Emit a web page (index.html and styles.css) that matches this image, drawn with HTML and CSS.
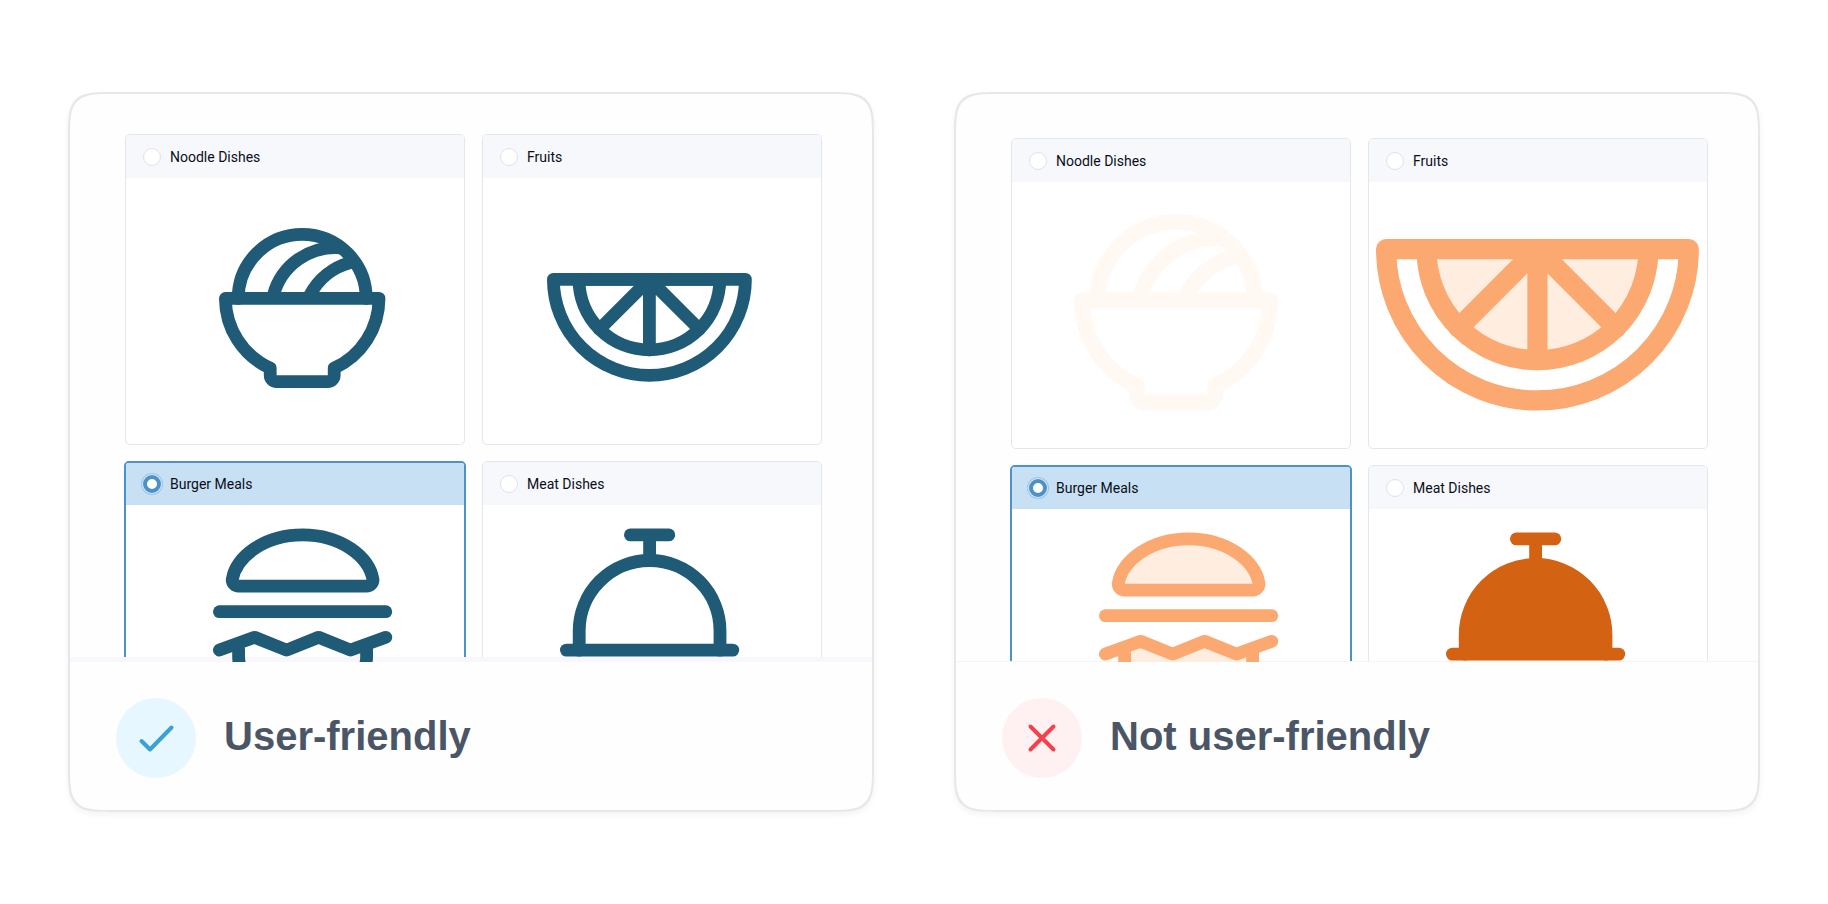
FILE: index.html
```html
<!DOCTYPE html>
<html lang="en">
<head>
<meta charset="utf-8">
<meta name="viewport" content="width=device-width, initial-scale=1">
<title>Image choices: user-friendly or not</title>
<link rel="stylesheet" href="styles.css">
</head>
<body>
<svg class="sprite" aria-hidden="true">
  <defs>
    <g id="noodles">
      <path d="M3 11A10 10 0 0 1 23 11"/>
      <path d="M8.5 10.500A10 10 0 0 1 19 3.1"/>
      <path d="M14.2 10.500A10 10 0 0 1 20.5 5.4"/>
      <path d="M1 11H25A12 12 0 0 1 18 21.9V23A1 1 0 0 1 17 24H9A1 1 0 0 1 8 23V21.9A12 12 0 0 1 1 11Z"/>
    </g>
    <g id="fruit">
      <path class="plain" d="M1 1H31A15 15 0 0 1 1 1Z"/>
      <path d="M5 1H27A11 11 0 0 1 5 1Z"/>
      <path d="M16 1V12M16 1L8.2 8.8M16 1L23.8 8.8"/>
    </g>
    <g id="burger">
      <path d="M4 9A1 1 0 0 1 3 8C3.6 4.4 8 1 14 1S24.4 4.4 25 8A1 1 0 0 1 24 9Z"/>
      <path d="M1 13H27"/>
      <path d="M4 18L6.5 17L11.5 19L16.5 17L21.5 19L24 18V20A5 5 0 0 1 19 25H9A5 5 0 0 1 4 20Z" stroke="none"/>
      <path class="plain" d="M4 19V20A5 5 0 0 0 9 25H19A5 5 0 0 0 24 20V19"/>
      <path class="plain" d="M1 19L6.5 17L11.5 19L16.5 17L21.5 19L27 17"/>
    </g>
    <g id="meat">
      <path d="M11 1H17M14 1V5"/>
      <path d="M3 19V16A11 11 0 0 1 25 16V19"/>
      <path d="M1 19H27"/>
    </g>
  </defs>
</svg>

<main class="page">
  <section class="card">
    <div class="gallery gallery-good">
      <label class="option">
        <span class="option-head"><input class="radio" type="radio" name="good">Noodle Dishes</span>
        <svg class="art teal" viewBox="0 0 338 266" aria-hidden="true"><use href="#noodles" transform="translate(93 50) scale(6.4)"/></svg>
      </label>
      <label class="option">
        <span class="option-head"><input class="radio" type="radio" name="good">Fruits</span>
        <svg class="art teal" viewBox="0 0 338 266" aria-hidden="true"><use href="#fruit" transform="translate(64 95) scale(6.4)"/></svg>
      </label>
      <label class="option selected">
        <span class="option-head"><input class="radio" type="radio" name="good" checked>Burger Meals</span>
        <svg class="art teal" viewBox="0 0 338 266" aria-hidden="true"><use href="#burger" transform="translate(87 23.5) scale(6.4)"/></svg>
      </label>
      <label class="option">
        <span class="option-head"><input class="radio" type="radio" name="good">Meat Dishes</span>
        <svg class="art teal" viewBox="0 0 338 266" aria-hidden="true"><use href="#meat" transform="translate(77 23.5) scale(6.4)"/></svg>
      </label>
    </div>
    <div class="verdict">
      <svg class="badge badge-good" viewBox="0 0 80 80" aria-hidden="true"><path d="M25.500 43L34 51.500L55.500 29.500"/></svg>
      <h2 class="title">User-friendly</h2>
    </div>
  </section>

  <section class="card">
    <div class="gallery gallery-bad">
      <label class="option">
        <span class="option-head"><input class="radio" type="radio" name="bad">Noodle Dishes</span>
        <svg class="art pale" viewBox="0 0 338 266" aria-hidden="true"><use href="#noodles" transform="translate(62 32) scale(7.85)"/></svg>
      </label>
      <label class="option">
        <span class="option-head"><input class="radio" type="radio" name="bad">Fruits</span>
        <svg class="art orange" viewBox="0 0 338 266" aria-hidden="true"><use href="#fruit" transform="translate(7 57) scale(10.09)"/></svg>
      </label>
      <label class="option selected">
        <span class="option-head"><input class="radio" type="radio" name="bad" checked>Burger Meals</span>
        <svg class="art orange" viewBox="0 0 338 266" aria-hidden="true"><use href="#burger" transform="translate(87 23.5) scale(6.4)"/></svg>
      </label>
      <label class="option">
        <span class="option-head"><input class="radio" type="radio" name="bad">Meat Dishes</span>
        <svg class="art rust" viewBox="0 0 338 266" aria-hidden="true"><use href="#meat" transform="translate(77 23.5) scale(6.4)"/></svg>
      </label>
    </div>
    <div class="verdict">
      <svg class="badge badge-bad" viewBox="0 0 80 80" aria-hidden="true"><path d="M28.500 28.500L51.500 51.500M51.500 28.500L28.500 51.500"/></svg>
      <h2 class="title">Not user-friendly</h2>
    </div>
  </section>
</main>
</body>
</html>
```

FILE: styles.css
```css
* {
  box-sizing: border-box;
}

body {
  margin: 0;
  background: #fff;
  color: #0a0e1a;
  font-family: Roboto, "Liberation Sans", sans-serif;
}

.sprite {
  display: none;
}

.page {
  display: grid;
  grid-template-columns: 1fr 1fr;
  gap: 80px;
  padding: 92px 68px;
}

.card {
  border: 2px solid #e7e7e8;
  border-radius: 48px;
  corner-shape: squircle;
  background: #fefefe;
  box-shadow: 0 3px 6px rgba(0, 0, 0, 0.05);
  overflow: hidden;
}

/* The gallery is cut off on purpose: its second row runs under the divider. */
.gallery {
  position: relative;
  display: grid;
  grid-template-columns: 1fr 1fr;
  gap: 16px 17px;
  align-content: start;
  height: 568px;
  padding: 40px 50px 0 55px;
  overflow: hidden;
}

.gallery-bad {
  padding-top: 44px;
}

.gallery::after {
  content: "";
  position: absolute;
  inset: auto 0 0 0;
  height: 5px;
  background: #f9f7fd;
}

.gallery-bad::after {
  height: 1px;
  background: #f5f5f8;
}

.option {
  display: block;
  border: 1px solid #e2e6ee;
  border-radius: 5px;
  background: #fff;
}

.option-head {
  display: flex;
  align-items: center;
  gap: 9px;
  height: 43px;
  padding: 0 17px;
  border-radius: 4px 4px 0 0;
  background: #f7f8fb;
  font-size: 14px;
  line-height: 20px;
}

.selected {
  margin: 0 -1px;
  border: 2px solid #4c91c7;
}

.selected .option-head {
  height: 42px;
  border-radius: 2px 2px 0 0;
  background: #c8e0f3;
}

.radio {
  appearance: none;
  flex: none;
  width: 18px;
  height: 18px;
  margin: 0;
  border: 1px solid #dfe2ec;
  border-radius: 50%;
  background: #fff;
}

.radio:checked {
  border: 4px solid #4c91c7;
  box-shadow: 0 0 0 1px #d8e9f7, 0 0 0 2px #9cc4e5;
}

.art {
  position: relative;
  z-index: 1;
  display: block;
  width: 100%;
  fill: none;
  stroke-width: 2;
  stroke-linecap: round;
  stroke-linejoin: round;
}

.plain {
  fill: none;
}

.teal {
  stroke: #1f5a77;
}

.pale {
  stroke: #fff8f3;
}

.orange {
  fill: #ffede0;
  stroke: #fba970;
}

.rust {
  fill: #d46213;
  stroke: #d46213;
}

.verdict {
  display: flex;
  align-items: center;
  gap: 28px;
  padding: 36px 46px 32px;
}

.badge {
  flex: none;
  width: 80px;
  height: 80px;
  border-radius: 50%;
  fill: none;
  stroke-width: 4;
  stroke-linecap: round;
  stroke-linejoin: round;
}

.badge-good {
  background: #e6f7ff;
  stroke: #3ba1d4;
}

.badge-bad {
  background: #fff0f1;
  stroke: #f5424a;
}

.title {
  margin: 0;
  padding-bottom: 4px;
  color: #4a5565;
  font: 700 40px/44px "Liberation Sans", Arial, sans-serif;
}
```
